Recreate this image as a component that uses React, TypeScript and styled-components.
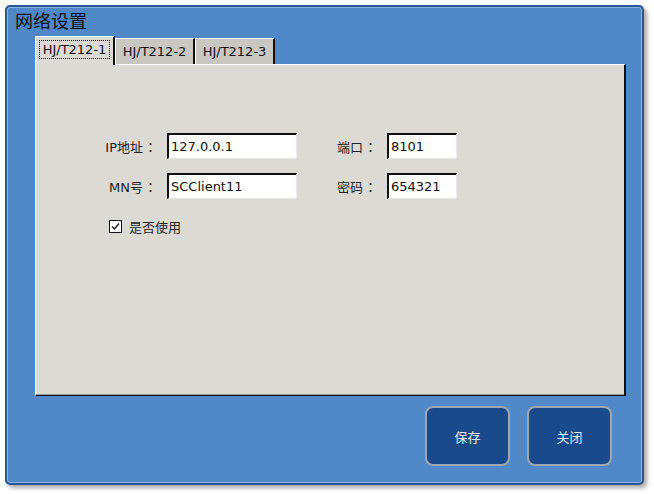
import React, { useState } from "react";
import styled, { createGlobalStyle } from "styled-components";

const Global = createGlobalStyle`
  html, body { margin: 0; padding: 0; background: #ffffff; }
  body { font-family: "DejaVu Sans", "Noto Sans CJK SC", sans-serif; }
  * { box-sizing: border-box; }
`;

const Page = styled.div`
  width: 654px;
  height: 494px;
  padding: 5px 0 0 5px;
`;

const Window = styled.div`
  width: 639px;
  height: 480px;
  border: 2px solid #2b5890;
  border-radius: 5px;
  background: #5088c8;
  box-shadow: inset 0 0 0 1px #86b3e4, 3px 3px 4px rgba(0, 0, 0, 0.35);
  display: flex;
  flex-direction: column;
`;

const Title = styled.div`
  height: 29px;
  padding: 2px 0 0 8px;
  font-family: "Noto Sans CJK SC", sans-serif;
  font-size: 18px;
  line-height: 22px;
  color: #111111;
`;

const Content = styled.div`
  margin-left: 28px;
  width: 591px;
  display: flex;
  flex-direction: column;
`;

const TabBar = styled.div`
  height: 28px;
  display: flex;
  align-items: flex-end;
`;

const Tab = styled.div<{ $active?: boolean }>`
  width: 80px;
  height: ${(p) => (p.$active ? "29px" : "26px")};
  margin-bottom: ${(p) => (p.$active ? "-1px" : "0")};
  position: relative;
  z-index: ${(p) => (p.$active ? 2 : 1)};
  background: ${(p) => (p.$active ? "#dcdad5" : "#c9c7c2")};
  border-top: 1px solid #ffffff;
  border-left: 1px solid #ffffff;
  border-right: 2px solid #111111;
  display: flex;
  align-items: center;
  justify-content: center;
  font-size: 13px;
  color: #111111;
  padding-bottom: ${(p) => (p.$active ? "3px" : "0")};
  cursor: default;
`;

const FocusRect = styled.span`
  border: 1px dotted #111111;
  padding: 2px 3px 1px 3px;
  line-height: 14px;
`;

const Panel = styled.div`
  height: 332px;
  background: #dcdad5;
  border-top: 1px solid #ffffff;
  border-left: 1px solid #ffffff;
  border-right: 2px solid #111111;
  border-bottom: 1px solid #111111;
  box-shadow: inset 0 -1px 0 #9a9894;
  padding: 68px 0 0 51px;
`;

const FormGrid = styled.div`
  display: grid;
  grid-template-columns: 80px 130px 90px 70px;
  grid-auto-rows: 26px;
  row-gap: 14px;
`;

const Label = styled.div<{ $align: "left" | "right" }>`
  display: flex;
  align-items: center;
  justify-content: ${(p) => (p.$align === "right" ? "flex-end" : "flex-start")};
  padding-right: ${(p) => (p.$align === "right" ? "10px" : "0")};
  padding-left: ${(p) => (p.$align === "left" ? "40px" : "0")};
  font-size: 13px;
  color: #222222;
`;

const Colon = styled.span`
  font-family: "Noto Sans CJK TC", sans-serif;
  font-size: 13px;
  width: 13px;
  margin-left: 1px;
  text-align: center;
`;

const Input = styled.input`
  width: 100%;
  height: 26px;
  margin: 0;
  padding: 0 0 0 2px;
  background: #ffffff;
  border-style: solid;
  border-width: 2px 1px 1px 2px;
  border-color: #111111 #e8e8e8 #e8e8e8 #111111;
  font-family: "DejaVu Sans", sans-serif;
  font-size: 13px;
  color: #111111;
  outline: none;
`;

const CheckRow = styled.label`
  margin: 21px 0 0 22px;
  display: flex;
  align-items: center;
  gap: 7px;
  font-size: 13px;
  color: #222222;
  height: 13px;
`;

const Box = styled.span`
  width: 13px;
  height: 13px;
  background: #ffffff;
  border: 1px solid #111111;
  display: flex;
  align-items: center;
  justify-content: center;
`;

const Footer = styled.div`
  margin-top: 10px;
  padding-right: 14px;
  display: flex;
  justify-content: flex-end;
  gap: 17px;
`;

const Button = styled.button`
  width: 85px;
  height: 60px;
  background: #1b4a8a;
  border: 2px solid #9ea6b1;
  border-radius: 8px;
  color: #e2eaf4;
  font-family: "Noto Sans CJK SC", sans-serif;
  font-size: 13px;
  cursor: pointer;
`;

export default function App() {
  const [active, setActive] = useState(0);
  const [checked, setChecked] = useState(true);
  const tabs = ["HJ/T212-1", "HJ/T212-2", "HJ/T212-3"];
  return (
    <>
      <Global />
      <Page>
        <Window>
          <Title>网络设置</Title>
          <Content>
            <TabBar>
              {tabs.map((t, i) => (
                <Tab key={t} $active={i === active} onClick={() => setActive(i)}>
                  {i === active ? <FocusRect>{t}</FocusRect> : t}
                </Tab>
              ))}
            </TabBar>
            <Panel>
              <FormGrid>
                <Label $align="right">IP地址<Colon>：</Colon></Label>
                <Input defaultValue="127.0.0.1" />
                <Label $align="left">端口<Colon>：</Colon></Label>
                <Input defaultValue="8101" />
                <Label $align="right">MN号<Colon>：</Colon></Label>
                <Input defaultValue="SCClient11" />
                <Label $align="left">密码<Colon>：</Colon></Label>
                <Input defaultValue="654321" />
              </FormGrid>
              <CheckRow onClick={() => setChecked(!checked)}>
                <Box>
                  {checked && (
                    <svg width="9" height="9" viewBox="0 0 9 9">
                      <path d="M1 4.5 L3.5 7 L8 1.5" stroke="#222" strokeWidth="1.4" fill="none" />
                    </svg>
                  )}
                </Box>
                是否使用
              </CheckRow>
            </Panel>
            <Footer>
              <Button>保存</Button>
              <Button>关闭</Button>
            </Footer>
          </Content>
        </Window>
      </Page>
    </>
  );
}
